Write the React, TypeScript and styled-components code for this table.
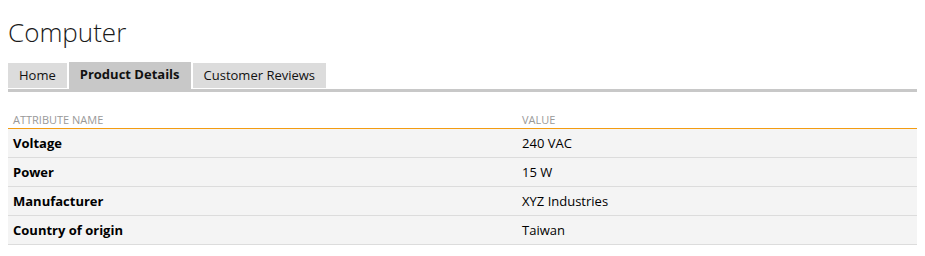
import React from 'react';
import styled, { createGlobalStyle } from 'styled-components';

const GlobalStyle = createGlobalStyle`
  body {
    margin: 8px;
    font-family: 'Open Sans', 'Noto Sans', sans-serif;
    color: #000;
    background: #fff;
  }
`;

const tabs = ['Home', 'Product Details', 'Customer Reviews'];

const attributes = [
  { name: 'Voltage', value: '240 VAC' },
  { name: 'Power', value: '15 W' },
  { name: 'Manufacturer', value: 'XYZ Industries' },
  { name: 'Country of origin', value: 'Taiwan' },
];

const App: React.FC = () => {
  return (
    <>
      <GlobalStyle />
      <Title>Computer</Title>
      <TabBar>
        {tabs.map((t) => (
          <Tab key={t} active={t === 'Product Details'}>
            {t}
          </Tab>
        ))}
      </TabBar>
      <Table>
        <thead>
          <tr>
            <HeadCell style={{ width: '56%' }}>Attribute Name</HeadCell>
            <HeadCell>Value</HeadCell>
          </tr>
        </thead>
        <tbody>
          {attributes.map((a) => (
            <Row key={a.name}>
              <NameCell>{a.name}</NameCell>
              <ValueCell>{a.value}</ValueCell>
            </Row>
          ))}
        </tbody>
      </Table>
    </>
  );
};

const Title = styled.h1`
  margin: 6px 0 0;
  font-weight: 300;
  font-size: 26px;
  line-height: 36px;
  color: #1a1a1a;
`;
const TabBar = styled.ul`
  display: flex;
  align-items: flex-end;
  gap: 2px;
  list-style: none;
  margin: 12px 0 0;
  padding: 0;
  border-bottom: 3px solid #c8c8c8;
`;
const Tab = styled.li<{ active?: boolean }>`
  padding: 0 11px;
  height: ${(p) => (p.active ? '27px' : '25px')};
  margin-bottom: ${(p) => (p.active ? '0' : '1px')};
  line-height: 24px;
  font-size: 13px;
  font-weight: ${(p) => (p.active ? 700 : 400)};
  background: ${(p) => (p.active ? '#c8c8c8' : '#dcdcdc')};
  color: #111;
  cursor: pointer;
`;
const Table = styled.table`
  width: 100%;
  margin-top: 19px;
  border-collapse: collapse;
`;
const HeadCell = styled.th`
  text-align: left;
  padding: 2px 5px 1px;
  line-height: 14px;
  font-size: 11px;
  font-weight: 400;
  text-transform: uppercase;
  color: #999;
  border-bottom: 1px solid #f39c12;
`;
const Row = styled.tr`
  background: #f4f4f4;
  border-bottom: 1px solid #dcdcdc;
`;
const NameCell = styled.td`
  padding: 1px 5px 0;
  line-height: 27px;
  font-size: 13px;
  font-weight: 700;
`;
const ValueCell = styled.td`
  padding: 1px 5px 0;
  line-height: 27px;
  font-size: 13px;
`;

export default App;
